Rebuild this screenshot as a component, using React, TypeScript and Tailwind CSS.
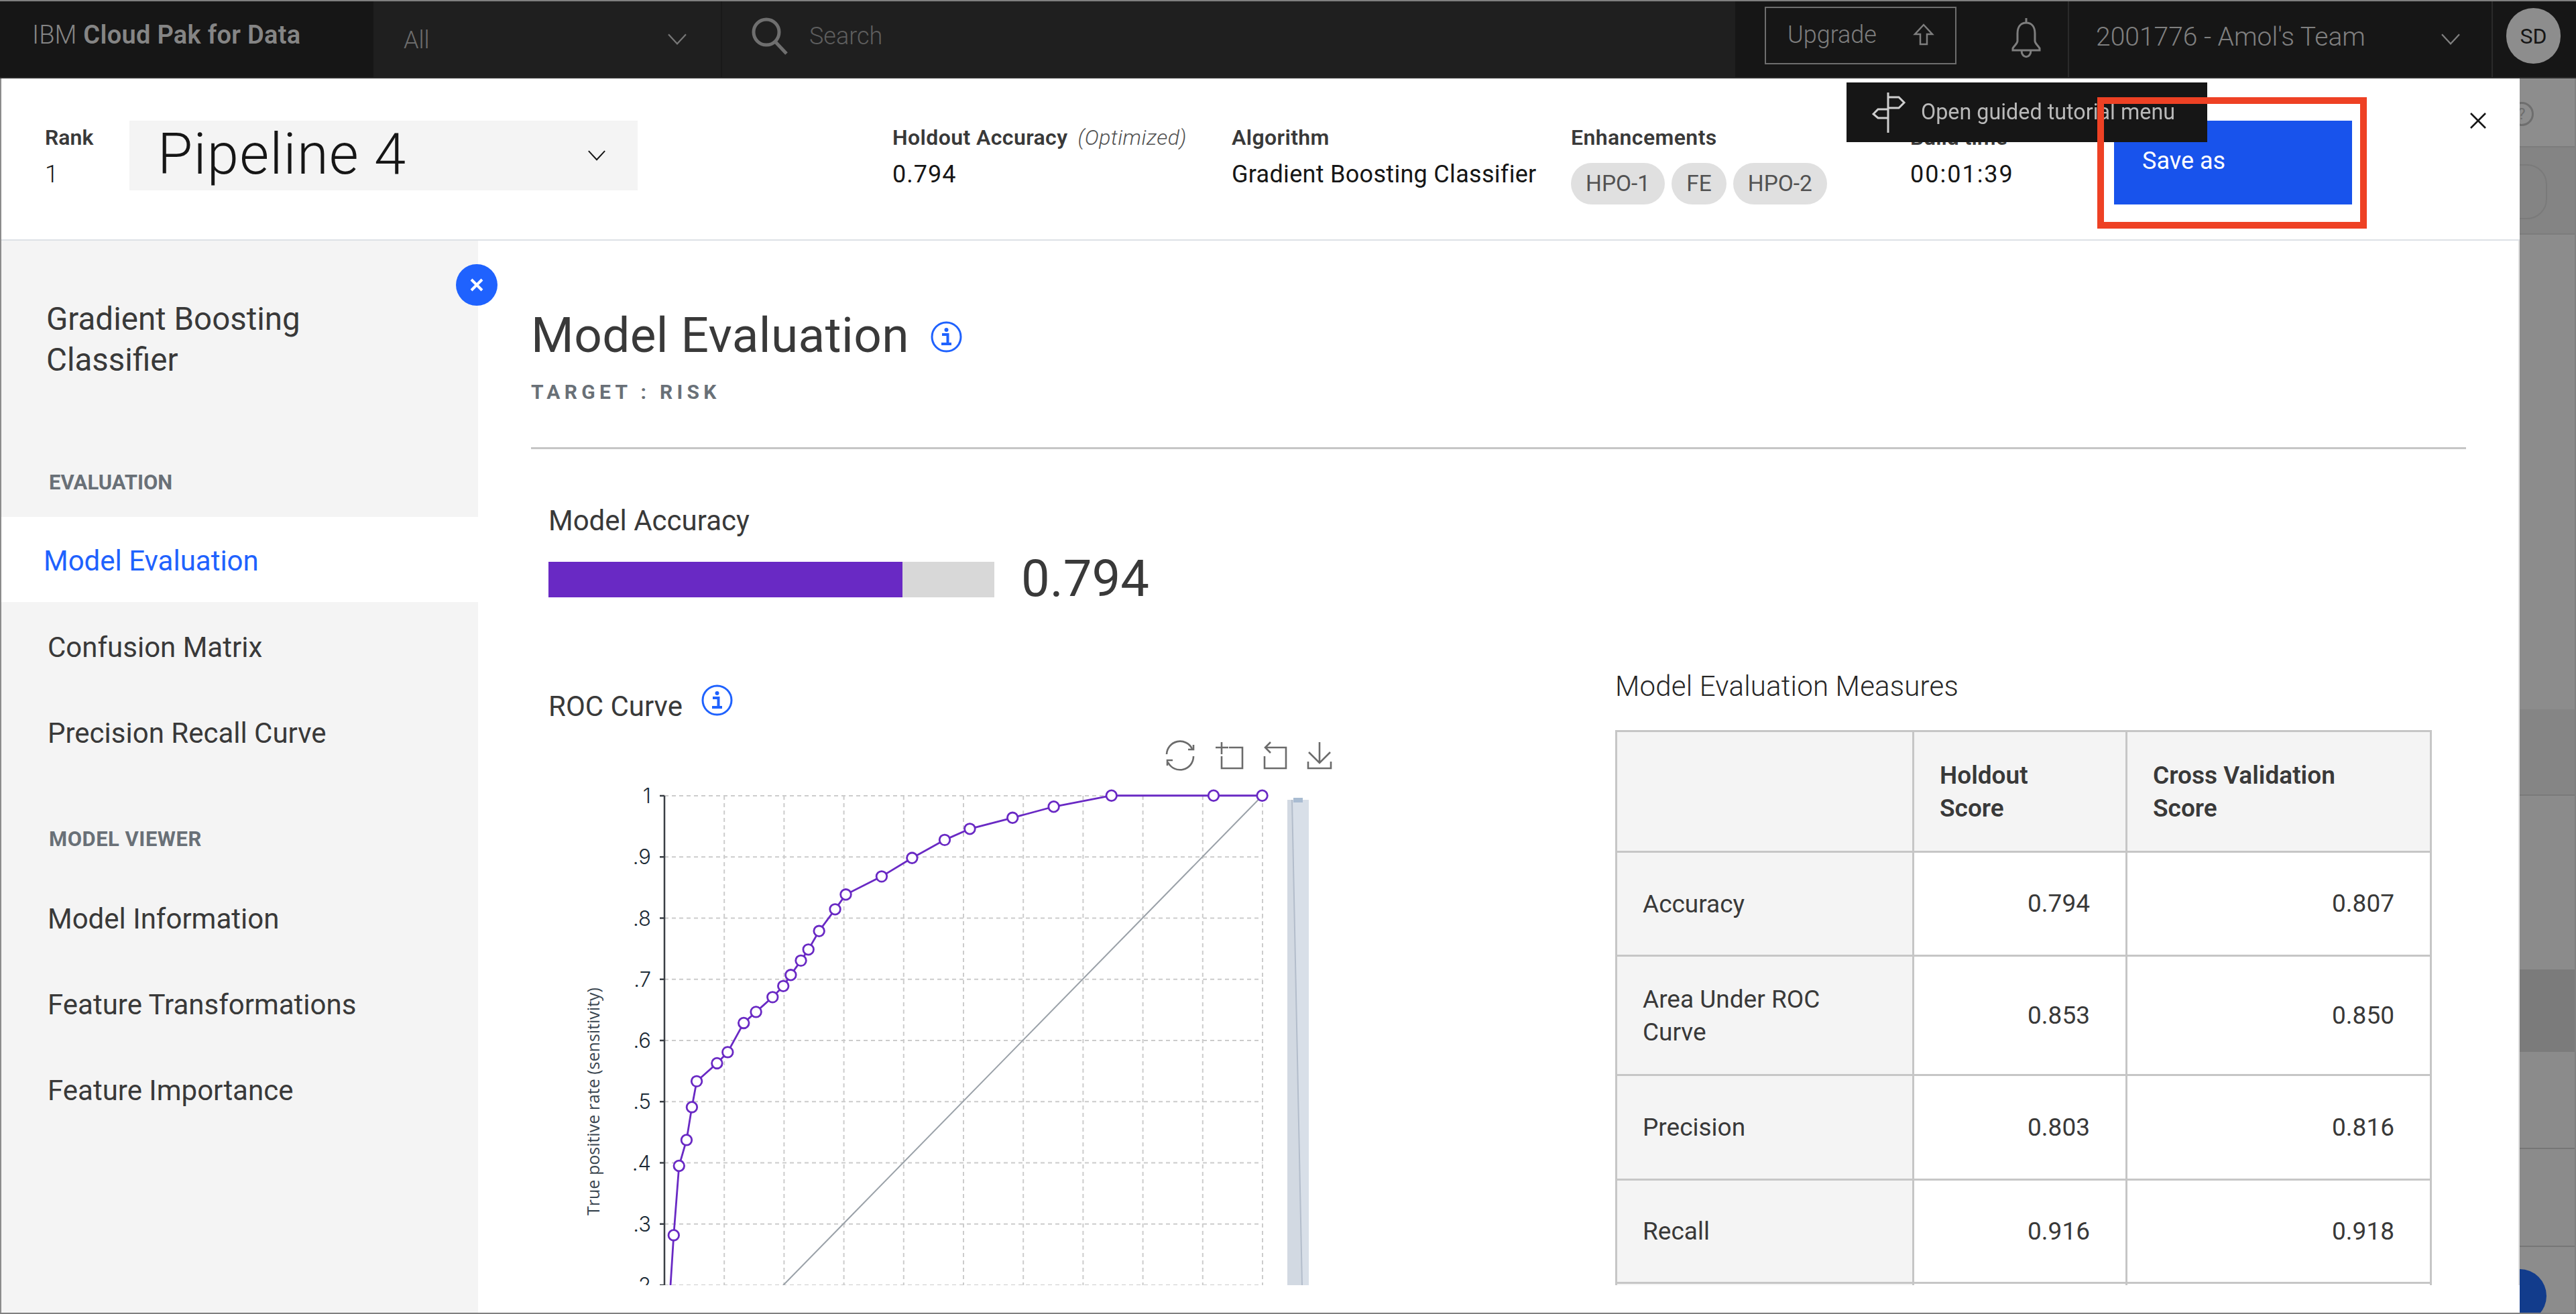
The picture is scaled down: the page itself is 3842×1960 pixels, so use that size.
import React from "react";

const RAW: [number, number][] = [
  [276, 1498], [282, 1376], [292, 1207], [306, 1144], [316, 1064], [325, 1001], [363, 957], [383, 930], [413, 859],
  [436, 832], [467, 796], [487, 769], [501, 742], [520, 707], [534, 680], [554, 635], [584, 582], [604, 546],
  [671, 502], [728, 457], [789, 413], [836, 386], [916, 359], [993, 332], [1101, 305], [1292, 305], [1383, 305],
];
const OX = 818;
const OY = 1079;
const px = (x: number) => 780 + x / 1.2544 - OX;
const py = (y: number) => 1000 + y / 1.6333 - OY;
const PTS = RAW.map(([x, y]) => [px(x), py(y)] as [number, number]);
const AX = 991 - OX;
const TOP = 1187 - OY;
const BOT = 1917 - OY;
const RIGHT = 1883 - OX;
const GX = Array.from({ length: 10 }, (_, i) => AX + (i + 1) * 89.2);
const GY = Array.from({ length: 9 }, (_, i) => TOP + (i * (BOT - TOP)) / 8);
const LABELS = ["1", ".9", ".8", ".7", ".6", ".5", ".4", ".3", ".2"];

function Info() {
  return (
    <svg width="47" height="47" viewBox="0 0 47 47" className="shrink-0">
      <circle cx="23.5" cy="23.5" r="21.5" fill="none" stroke="#1f62fe" strokeWidth="3" />
      <circle cx="23.5" cy="13" r="3" fill="#1f62fe" />
      <path d="M17 20h8.5v13M16 34h15" fill="none" stroke="#1f62fe" strokeWidth="4" />
    </svg>
  );
}

function Chevron({ color, size = 30 }: { color: string; size?: number }) {
  return (
    <svg width={size} height={size * 0.62} viewBox="0 0 30 18">
      <path d="M2 2l13 14L28 2" fill="none" stroke={color} strokeWidth="2.2" />
    </svg>
  );
}

function Metric({ label, extra, children }: { label: string; extra?: string; children: React.ReactNode }) {
  return (
    <div className="w-[506px] shrink-0 pt-[63px]">
      <div className="h-[50px] leading-[50px] text-[32px] tracking-[0.4px] font-semibold text-[#393939] whitespace-nowrap">
        {label}
        {extra && <span className="ml-[15px] font-light italic text-[#525252]">{extra}</span>}
      </div>
      {children}
    </div>
  );
}

function Chip({ children }: { children: React.ReactNode }) {
  return (
    <span className="h-[62px] px-[22px] rounded-[31px] bg-[#e0e0e0] text-[#525252] text-[33.5px] leading-[62px] whitespace-nowrap">
      {children}
    </span>
  );
}

function NavItem({ children, active }: { children: React.ReactNode; active?: boolean }) {
  return (
    <div
      className={
        active
          ? "h-[127px] bg-white flex items-center pl-[63px] pt-[3px] text-[42px] text-[#1f62fe] w-[711px]"
          : "h-[128px] flex items-center pl-[69px] text-[42px] text-[#393939]"
      }
    >
      {children}
    </div>
  );
}

const th = "border-[3px] border-[#c6c6c6] bg-[#f4f4f4] text-left align-middle font-semibold px-[38px] leading-[49px]";
const tl = "border-[3px] border-[#c6c6c6] bg-[#f4f4f4] text-left align-middle font-normal px-[38px] leading-[49px]";
const td = "border-[3px] border-[#c6c6c6] bg-white text-right align-middle px-[53px]";

const ROWS: [string, string, string, string][] = [
  ["Accuracy", "0.794", "0.807", "h-[155px]"],
  ["Area Under ROC Curve", "0.853", "0.850", "h-[178px]"],
  ["Precision", "0.803", "0.816", "h-[156px]"],
  ["Recall", "0.916", "0.918", "h-[154px]"],
];

export default function App() {
  return (
    <div className="relative w-[3842px] h-[1960px] overflow-hidden bg-[#8c8c8c] flex flex-col [font-family:Roboto,sans-serif]">
      <div className="h-[2px] bg-[#7f7f7f] shrink-0" />
      {/* top bar */}
      <div className="h-[115px] shrink-0 flex bg-[#1f1f1f] border-b-[2px] border-[#2a2a2a] text-[#7b7b7b]">
        <div className="w-[557px] bg-[#161616] pl-[48px] flex items-center pb-[13px] text-[38px] text-[#858585] whitespace-nowrap">
          <span className="font-light">IBM</span>
          <span className="ml-[10px] font-semibold tracking-[0.3px]">Cloud Pak for Data</span>
        </div>
        <div className="w-[520px] border-r-[2px] border-[#191919] flex items-center pl-[45px] pr-[50px] justify-between text-[36px] text-[#6d6d6d]">
          <span className="font-light pt-[2px]">All</span>
          <Chevron color="#777" />
        </div>
        <div className="flex-1 flex items-center pl-[44px] pb-[10px]">
          <svg width="56" height="56" viewBox="0 0 56 56">
            <circle cx="22" cy="22" r="19" fill="none" stroke="#6f6f6f" strokeWidth="5" />
            <path d="M35 36l17 18" stroke="#6f6f6f" strokeWidth="5" />
          </svg>
          <span className="ml-[30px] text-[36px] font-light text-[#5e5e5e]">Search</span>
        </div>
        <div className="w-[1254px] bg-[#161616] flex items-stretch">
          <div className="ml-[44px] mt-[8px] w-[286px] h-[86px] border-[2px] border-[#6e6e6e] flex items-center pl-[32px] pb-[2px] text-[36px] font-light text-[#7e7e7e] shrink-0">
            <span>Upgrade</span>
            <svg width="32" height="34" viewBox="0 0 32 34" className="ml-[54px]">
              <path d="M16 2L3 16h8v15h10V16h8z" fill="none" stroke="#7e7e7e" strokeWidth="2.5" />
            </svg>
          </div>
          <div className="w-[168px] shrink-0 border-r-[2px] border-[#2a2a2a] flex items-center pl-[81px] pb-[5px]">
            <svg width="46" height="62" viewBox="0 0 46 62">
              <path
                d="M23 2v7M23 9c-9 0-13 7-13 16v11c0 4-4 6-7 11v3h40v-3c-3-5-7-7-7-11V25c0-9-4-16-13-16zM16 50c0 13 14 13 14 0"
                fill="none"
                stroke="#7e7e7e"
                strokeWidth="3"
              />
            </svg>
          </div>
          <div className="w-[632px] shrink-0 border-r-[2px] border-[#2a2a2a] flex items-center pl-[40px] pr-[46px] justify-between text-[39px] font-light text-[#808080]">
            <span className="pb-[7px]">2001776 - Amol's Team</span>
            <Chevron color="#808080" />
          </div>
          <div className="ml-[20px] mt-[10px] w-[81px] h-[83px] rounded-full bg-[#8d8d8d] flex items-center justify-center text-[32px] text-[#161616] shrink-0">
            SD
          </div>
        </div>
      </div>

      {/* body row */}
      <div className="flex-1 min-h-0 flex">
        <div className="ml-[2px] w-[3756px] h-[1841px] bg-white flex flex-col shrink-0 relative z-10">
          {/* modal header */}
          <div className="h-[242px] shrink-0 border-b-[2px] border-[#dde1e6] flex">
            <div className="w-[191px] shrink-0 pl-[65px] pt-[63px]">
              <div className="h-[50px] leading-[50px] text-[32px] font-semibold text-[#393939]">Rank</div>
              <div className="h-[60px] leading-[60px] text-[36px] font-light text-[#161616]">1</div>
            </div>
            <div className="mt-[63px] w-[758px] h-[104px] shrink-0 bg-[#f4f4f4] flex items-center pl-[42px] pr-[47px] justify-between">
              <span className="text-[85px] tracking-[1.2px] font-light text-[#161616] leading-none whitespace-nowrap -mt-[3px]">Pipeline 4</span>
              <Chevron color="#161616" size={28} />
            </div>
            <div className="w-[380px] shrink-0" />
            <Metric label="Holdout Accuracy" extra="(Optimized)">
              <div className="h-[60px] leading-[60px] text-[36px] tracking-[1px] text-[#161616]">0.794</div>
            </Metric>
            <Metric label="Algorithm">
              <div className="h-[60px] leading-[60px] text-[36px] tracking-[0.3px] text-[#161616] whitespace-nowrap">Gradient Boosting Classifier</div>
            </Metric>
            <Metric label="Enhancements">
              <div className="mt-[13px] flex gap-[10px]">
                <Chip>HPO-1</Chip>
                <Chip>FE</Chip>
                <Chip>HPO-2</Chip>
              </div>
            </Metric>
            <div className="w-[304px] shrink-0 pt-[63px]">
              <div className="h-[50px] leading-[50px] text-[32px] font-semibold text-[#393939]">Build time</div>
              <div className="h-[60px] leading-[60px] text-[36px] tracking-[2px] text-[#161616]">00:01:39</div>
            </div>
            <div className="mt-[63px] w-[355px] h-[125px] shrink-0 bg-[#1853ec] pl-[42px] pt-[35px] text-white text-[36px] leading-[50px]">
              Save as
            </div>
            <div className="ml-[175px] mt-[50px] shrink-0">
              <svg width="26" height="26" viewBox="0 0 26 26">
                <path d="M2 2l22 22M24 2L2 24" stroke="#161616" strokeWidth="2.6" />
              </svg>
            </div>
          </div>

          {/* modal body */}
          <div className="flex-1 min-h-0 flex">
            <div className="w-[711px] shrink-0 bg-[#f4f4f4] flex flex-col">
              <div className="pl-[67px] pt-[87px] text-[47.5px] leading-[61px] text-[#393939]">
                Gradient Boosting
                <br />
                Classifier
              </div>
              <div className="mt-[132px] pl-[71px] h-[40px] leading-[40px] text-[31px] font-bold text-[#697077]">EVALUATION</div>
              <div className="mt-[31px]">
                <NavItem active>Model Evaluation</NavItem>
              </div>
              <div className="mt-[3px]">
                <NavItem>Confusion Matrix</NavItem>
                <NavItem>Precision Recall Curve</NavItem>
              </div>
              <div className="mt-[75px] pl-[71px] h-[40px] leading-[40px] text-[31px] tracking-[0.5px] font-bold text-[#697077]">MODEL VIEWER</div>
              <div className="mt-[34px]">
                <NavItem>Model Information</NavItem>
                <NavItem>Feature Transformations</NavItem>
                <NavItem>Feature Importance</NavItem>
              </div>
            </div>

            <div className="w-[3045px] shrink-0 h-[1558px] overflow-hidden pl-[79px] flex flex-col border-r-[2px] border-[#e0e0e0]">
              <div className="pt-[101px] flex items-center h-[181px] shrink-0">
                <span className="text-[73px] tracking-[0.4px] leading-[80px] text-[#393939] whitespace-nowrap">Model Evaluation</span>
                <span className="ml-[32px] mt-[4px]">
                  <Info />
                </span>
              </div>
              <div className="mt-[25px] h-[40px] leading-[40px] text-[30px] font-bold tracking-[6.3px] text-[#697077]">TARGET : RISK</div>
              <div className="mt-[62px] h-[3px] w-[2886px] bg-[#c6c6c6] shrink-0" />
              <div className="mt-[82px] ml-[26px] h-[50px] leading-[50px] text-[42px] text-[#393939]">Model Accuracy</div>
              <div className="mt-[36px] ml-[26px] flex items-center h-[53px] shrink-0">
                <div className="w-[665px] h-[53px] bg-[#d8d8d8]">
                  <div className="w-[528px] h-[53px] bg-[#6929c4]" />
                </div>
                <span className="ml-[40px] text-[76px] leading-none text-[#393939] -mt-[3px]">0.794</span>
              </div>

              <div className="mt-[108px] ml-[26px] flex shrink-0">
                <div className="w-[1591px] shrink-0 pt-[30px]">
                  <div className="flex items-center h-[50px]">
                    <span className="text-[42px] leading-[50px] text-[#393939]">ROC Curve</span>
                    <span className="ml-[28px] -mt-[20px]">
                      <Info />
                    </span>
                  </div>
                  <svg width="1200" height="838" viewBox="0 0 1200 838" className="block">
                    {/* toolbar */}
                    <g fill="none" stroke="#6b6b6b" strokeWidth="2.6">
                      <path d="M922 46a20 20 0 0 1 38-8M962 49a20 20 0 0 1-38 9" />
                      <path d="M954 39h8v-7M931 55h-8v8" />
                      <path d="M995 36h19M1004 28v18M1004 49v18h31V36h-20" />
                      <path d="M1068 49v18h32V36h-31M1077 28l-8 8 8 8" />
                      <path d="M1150 28v31M1134 43l16 16 16-16M1133 57v10h34V57" />
                    </g>
                    {/* grid */}
                    <g stroke="#cccccc" strokeWidth="2" strokeDasharray="6 5">
                      {GX.map((x) => (
                        <line key={x} x1={x} y1={TOP} x2={x} y2={BOT} />
                      ))}
                      {GY.map((y) => (
                        <line key={y} x1={AX} y1={y} x2={RIGHT} y2={y} />
                      ))}
                    </g>
                    <line x1={AX} y1={TOP} x2={AX} y2={BOT} stroke="#3a3f45" strokeWidth="2.5" />
                    {GY.map((y) => (
                      <line key={y} x1={AX - 7} y1={y} x2={AX} y2={y} stroke="#3a3f45" strokeWidth="2.5" />
                    ))}
                    {GY.map((y, i) => (
                      <text key={y} x={AX - 20} y={y + 11} textAnchor="end" fontSize="31" fill="#1c2b36" fontFamily="Inter, sans-serif" fontWeight="300">
                        {LABELS[i]}
                      </text>
                    ))}
                    <text
                      transform={`translate(${886 - OX + 8} ${1643 - OY}) rotate(-90)`}
                      textAnchor="middle"
                      fontSize="25"
                      fill="#3a4650"
                      fontFamily="Open Sans, sans-serif"
                    >
                      True positive rate (sensitivity)
                    </text>
                    <line x1={px(487)} y1={BOT} x2={px(1383)} y2={TOP} stroke="#9aa1a8" strokeWidth="2" />
                    <polyline points={PTS.map((p) => p.join(",")).join(" ")} fill="none" stroke="#6929c4" strokeWidth="2.8" />
                    {PTS.slice(1).map(([x, y]) => (
                      <circle key={`${x}-${y}`} cx={x} cy={y} r="7.8" fill="#fff" stroke="#6929c4" strokeWidth="2.8" />
                    ))}
                    {/* range rail */}
                    <rect x={1920 - OX} y={TOP + 6} width="32" height={BOT - TOP - 6} fill="#d8dfe8" />
                    <path d={`M${1920 - OX} ${TOP + 6}h7l15 ${BOT - TOP - 6}h-22z`} fill="#d2d9e2" />
                    <line x1={1927 - OX} y1={TOP + 6} x2={1942 - OX} y2={BOT} stroke="#b3bdcb" strokeWidth="2" />
                    <rect x={1929 - OX} y={TOP + 3} width="14" height="7" fill="#a9bcd2" />
                  </svg>
                </div>
                <div className="text-[37px] text-[#393939]">
                  <div className="h-[50px] leading-[50px] text-[42px] tracking-[0.2px] font-light text-[#262626] whitespace-nowrap">Model Evaluation Measures</div>
                  <table className="mt-[40px] w-[1215px] table-fixed border-collapse">
                    <colgroup>
                      <col className="w-[443px]" />
                      <col className="w-[318px]" />
                      <col className="w-[454px]" />
                    </colgroup>
                    <thead>
                      <tr className="h-[180px]">
                        <th className={th} />
                        <th className={th}>
                          Holdout
                          <br />
                          Score
                        </th>
                        <th className={th}>
                          Cross Validation
                          <br />
                          Score
                        </th>
                      </tr>
                    </thead>
                    <tbody>
                      {ROWS.map(([name, a, b, h]) => (
                        <tr key={name} className={h}>
                          <th className={tl}>{name}</th>
                          <td className={td}>{a}</td>
                          <td className={td}>{b}</td>
                        </tr>
                      ))}
                      <tr className="h-[154px]">
                        <th className={tl} />
                        <td className={td} />
                        <td className={td} />
                      </tr>
                    </tbody>
                  </table>
                </div>
              </div>
            </div>
          </div>

          {/* sidebar toggle */}
          <div className="absolute left-[678px] top-[277px] w-[62px] h-[62px] rounded-full bg-[#1f62fe] flex items-center justify-center">
            <svg width="20" height="20" viewBox="0 0 20 20">
              <path d="M2 2l16 16M18 2L2 18" stroke="#fff" strokeWidth="4" />
            </svg>
          </div>
        </div>

        {/* dimmed page behind the modal */}
        <div className="flex-1 relative border-r-[2px] border-[#808080]">
          <div className="h-[103px] bg-[#8d8d8d] border-b-[2px] border-[#7c7c7c]" />
          <div className="h-[130px] bg-[#848484] border-b-[2px] border-[#7c7c7c]" />
          <div className="h-[708px] bg-[#8c8c8c]" />
          <div className="h-[129px] bg-[#858585] border-b-[2px] border-[#7a7a7a]" />
          <div className="h-[259px] bg-[#8b8b8b]" />
          <div className="h-[123px] bg-[#7b7b7b]" />
          <div className="h-[145px] bg-[#8b8b8b] border-b-[2px] border-[#767676]" />
          <div className="h-[146px] bg-[#8b8b8b] border-b-[2px] border-[#767676]" />
          <div className="absolute top-[35px] -left-[15px] w-[36px] h-[36px] rounded-full border-[3px] border-[#6e6e6e] flex items-center justify-center text-[24px] text-[#6e6e6e]">
            ?
          </div>
          <div className="absolute top-[128px] -left-[30px] w-[71px] h-[82px] rounded-[30px] border-[2px] border-[#7a7a7a]" />
          <div className="absolute top-[1776px] -left-[40px] w-[80px] h-[80px] rounded-full bg-[#123c8c]" />
        </div>
      </div>
      <div className="absolute z-10 left-0 right-0 bottom-0 h-[2px] bg-[#808080]" />

      {/* guided tour tooltip */}
      <div className="absolute z-20 left-[2754px] top-[123px] w-[538px] h-[89px] bg-[#161616] flex items-center text-[32.3px] text-[#b9b9b9] whitespace-nowrap">
        <svg width="52" height="64" viewBox="0 0 52 64" className="ml-[38px] blur-[0.5px]">
          <path d="M24 2v60M24 9h16l8 8-8 8H24M24 27H9l-7 7 7 6h15" fill="none" stroke="#cfcfcf" strokeWidth="3" />
        </svg>
        <span className="ml-[21px] blur-[0.5px]">Open guided tutorial menu</span>
      </div>

      {/* annotation box */}
      <div className="absolute z-30 left-[3128px] top-[145px] w-[402px] h-[196px] border-[10px] border-[#ee4124]" />
    </div>
  );
}
